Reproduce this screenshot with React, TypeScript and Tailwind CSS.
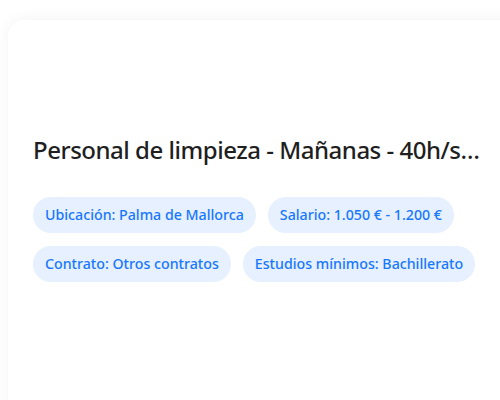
const tags = [
  'Ubicación: Palma de Mallorca',
  'Salario: 1.050 € - 1.200 €',
  'Contrato: Otros contratos',
  'Estudios mínimos: Bachillerato',
];

export default function App() {
  return (
    <div className="h-[400px] w-[500px] overflow-hidden bg-white pl-2 pt-5" style={{ fontFamily: '"Noto Sans", sans-serif' }}>
      <div className="h-[420px] w-[520px] rounded-2xl bg-white px-[25px] pt-[114px] shadow-[0_0_16px_rgba(0,0,0,0.05)]">
        <h2 className="w-[453px] truncate text-[24px] font-medium leading-8 tracking-[-0.02em] text-[#1f1f1f]">
          Personal de limpieza - Mañanas - 40h/semana
        </h2>
        <div className="mt-[31px] flex w-[460px] flex-wrap gap-x-3 gap-y-[13px]">
          {tags.map((t) => (
            <span key={t} className="flex h-9 items-center rounded-full bg-[#e6f0ff] px-3 text-[14.2px] font-medium text-[#1677ff]">
              {t}
            </span>
          ))}
        </div>
      </div>
    </div>
  );
}
